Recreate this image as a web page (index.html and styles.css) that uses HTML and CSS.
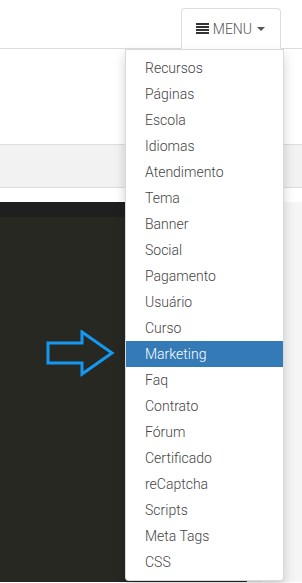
FILE: index.html
```html
<!DOCTYPE html>
<html lang="pt">
<head>
  <meta charset="UTF-8">
  <meta name="viewport" content="width=device-width, initial-scale=1.0">
  <title>Menu</title>
  <link rel="stylesheet" href="styles.css">
</head>
<body>

  <div class="topbar">
    <div class="menu-wrap">
      <button class="menu-btn">
        <svg class="menu-icon" width="13" height="11" viewBox="0 0 13 11">
          <rect x="0" y="0" width="13" height="2" fill="#333"/>
          <rect x="0" y="3" width="13" height="2" fill="#333"/>
          <rect x="0" y="6" width="13" height="2" fill="#333"/>
          <rect x="0" y="9" width="13" height="2" fill="#333"/>
        </svg>
        <span class="menu-text">MENU</span>
        <span class="caret"></span>
      </button>

      <ul class="dropdown">
        <li><a href="#">Recursos</a></li>
        <li><a href="#">Páginas</a></li>
        <li><a href="#">Escola</a></li>
        <li><a href="#">Idiomas</a></li>
        <li><a href="#">Atendimento</a></li>
        <li><a href="#">Tema</a></li>
        <li><a href="#">Banner</a></li>
        <li><a href="#">Social</a></li>
        <li><a href="#">Pagamento</a></li>
        <li><a href="#">Usuário</a></li>
        <li><a href="#">Curso</a></li>
        <li class="active"><a href="#">Marketing</a></li>
        <li><a href="#">Faq</a></li>
        <li><a href="#">Contrato</a></li>
        <li><a href="#">Fórum</a></li>
        <li><a href="#">Certificado</a></li>
        <li><a href="#">reCaptcha</a></li>
        <li><a href="#">Scripts</a></li>
        <li><a href="#">Meta Tags</a></li>
        <li><a href="#">CSS</a></li>
      </ul>
    </div>
  </div>

  <div class="panel-top"></div>
  <div class="tabs-bar"></div>
  <div class="spacer"></div>

  <div class="editor">
    <div class="code">
      <div class="code-head"></div>
      <div class="code-body"></div>
    </div>
    <div class="gutter"></div>
  </div>

  <!-- seta apontando para o item ativo -->
  <svg class="pointer" width="72" height="50" viewBox="0 0 72 50">
    <polygon points="2,13 36,13 36,2 66,23 36,44 36,33 2,33" fill="none" stroke="#1598f2" stroke-width="3"/>
  </svg>

</body>
</html>
```

FILE: styles.css
```css
body {
  font-family: 'Roboto', 'Liberation Sans', sans-serif;
  margin: 0;
  padding: 0;
  background: #fff;
  color: #555;
  height: 583px;
  overflow: hidden;
  position: relative;
}
.topbar {
  height: 48px;
  border-bottom: 1px solid #ddd;
  display: flex;
  justify-content: flex-end;
  align-items: flex-end;
  padding-right: 21px;
}
.menu-wrap {
  position: relative;
}
.menu-btn {
  display: flex;
  align-items: center;
  height: 41px;
  margin-bottom: -1px;
  padding: 0 15px 0 14px;
  background: #fff;
  border: 1px solid #ddd;
  border-bottom-color: #fff;
  border-radius: 4px 4px 0 0;
  font-family: inherit;
  font-size: 14px;
  font-weight: 300;
  color: #555;
}
.menu-icon {
  margin-right: 4px;
}
.caret {
  display: inline-block;
  margin-left: 5px;
  border-top: 4px solid #555;
  border-left: 4px solid transparent;
  border-right: 4px solid transparent;
}
.dropdown {
  position: absolute;
  top: 41px;
  right: -3px;
  width: 157px;
  margin: 0;
  padding: 5px 0;
  list-style: none;
  background: #fff;
  border: 1px solid rgba(0, 0, 0, 0.15);
  border-radius: 0 0 4px 4px;
  box-shadow: 0 6px 12px rgba(0, 0, 0, 0.175);
  z-index: 10;
}
.dropdown a {
  display: block;
  padding: 3px 20px 3px 19px;
  line-height: 20px;
  font-size: 14px;
  font-weight: 300;
  color: #444;
  text-decoration: none;
}
.dropdown .active a {
  background: #337ab7;
  color: #fff;
}
.panel-top {
  height: 95px;
}
.tabs-bar {
  height: 42px;
  background: #f2f2f2;
  border-top: 1px solid #ddd;
  border-bottom: 1px solid #ddd;
}
.spacer {
  height: 14px;
}
.editor {
  display: flex;
  height: 380px;
}
.code {
  width: 247px;
  display: flex;
  flex-direction: column;
}
.code-head {
  height: 15px;
  background: #1f1f1f;
}
.code-body {
  flex: 1;
  background: #272822;
}
.gutter {
  flex: 1;
  background: #f5f5f5;
  border-left: 15px solid #ebebeb;
}
.pointer {
  position: absolute;
  left: 46px;
  top: 330px;
}
```
